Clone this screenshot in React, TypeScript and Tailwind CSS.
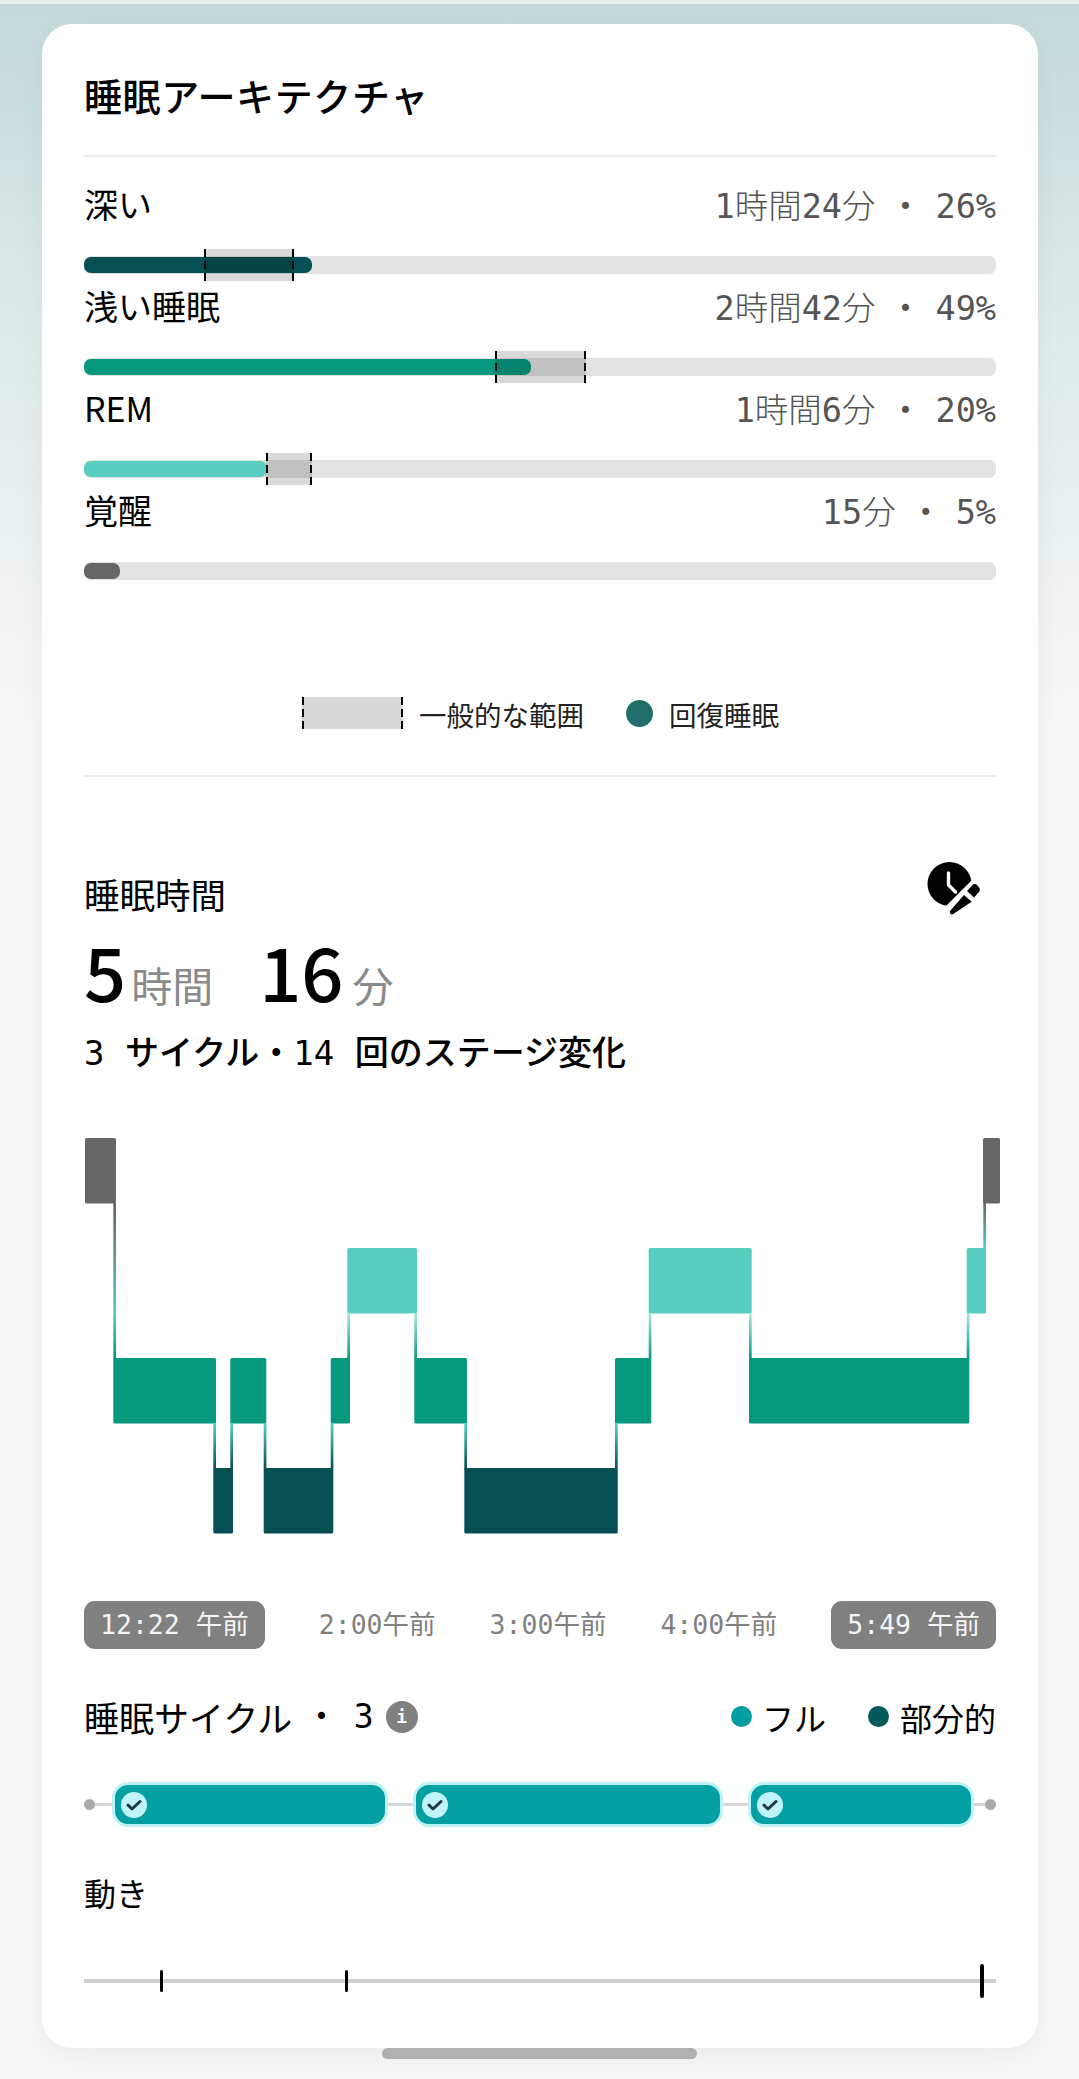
const mono = "font-['DejaVu_Sans_Mono','Noto_Sans_CJK_JP',monospace]";

const Tick = ({ side }: { side: "left" | "right" }) => (
  <span
    className={
      "absolute top-0 h-full w-[2px] bg-[repeating-linear-gradient(to_bottom,#000_0,#000_8px,transparent_8px,transparent_12px)] " +
      (side === "left" ? "left-0" : "right-0")
    }
  />
);

const Range = ({ left, width }: { left: number; width: number }) => (
  <div className="absolute top-[-7px] h-[32px] rounded-[3px] bg-[rgba(0,0,0,0.15)]" style={{ left, width }}>
    <Tick side="left" />
    <Tick side="right" />
  </div>
);

type RowData = {
  label: string;
  value: string;
  pct: string;
  fill: number;
  color: string;
  range?: [number, number];
};

const rows: RowData[] = [
  { label: "深い", value: "1時間24分", pct: "26%", fill: 228, color: "#065053", range: [120, 90] },
  { label: "浅い睡眠", value: "2時間42分", pct: "49%", fill: 447, color: "#07997e", range: [411, 91] },
  { label: "REM", value: "1時間6分", pct: "20%", fill: 183, color: "#57cebf", range: [182, 46] },
  { label: "覚醒", value: "15分", pct: "5%", fill: 36, color: "#666666" },
];

const SleepRow = ({ r }: { r: RowData }) => (
  <div className="flex flex-col">
    <div className="flex h-[44px] items-start justify-between">
      <span className="text-[34px] leading-[42px] text-black">{r.label}</span>
      <span className={"flex items-center pt-[3px] text-[33.5px] leading-[42px] font-light text-[#555555] " + mono}>
        <span>{r.value}</span>
        <span className="w-[60px] text-center text-[24px]">•</span>
        <span>{r.pct}</span>
      </span>
    </div>
    <div className="relative mt-[29px] h-[18px] rounded-[7px] bg-[#e3e3e3]">
      <div className="absolute top-[1px] left-0 h-[16px] rounded-[7px]" style={{ width: r.fill, background: r.color }} />
      {r.range && <Range left={r.range[0]} width={r.range[1]} />}
    </div>
  </div>
);

const DEEP = "#065053";
const LIGHT = "#07997e";
const REM = "#57cebf";
const AWAKE = "#666666";
const L: Record<string, [number, string]> = {
  a: [1138, AWAKE],
  r: [1248, REM],
  l: [1358, LIGHT],
  d: [1468, DEEP],
};
const blocks: [string, number, number][] = [
  ["a", 85, 116],
  ["l", 113.3, 216],
  ["d", 213.3, 233],
  ["l", 230.3, 266.3],
  ["d", 263.7, 333.3],
  ["l", 330.7, 350],
  ["r", 347.3, 417],
  ["l", 414.3, 467],
  ["d", 464.3, 617.7],
  ["l", 615, 651.3],
  ["r", 648.7, 751.7],
  ["l", 749, 969.3],
  ["r", 966.7, 986],
  ["a", 983, 1000],
];

const Chart = () => (
  <svg width="916" height="396" viewBox="84 1138 916 396" className="block flex-none">
    <defs>
      <linearGradient id="g0" x1="0" y1="0" x2="0" y2="1">
        <stop offset="0" stopColor="#666666" />
        <stop offset="0.7" stopColor="#57cebf" />
        <stop offset="1" stopColor="#07997e" />
      </linearGradient>
      <linearGradient id="gLD" x1="0" y1="0" x2="0" y2="1">
        <stop offset="0" stopColor="#57cebf" />
        <stop offset="1" stopColor="#065053" />
      </linearGradient>
      <linearGradient id="gRL" x1="0" y1="0" x2="0" y2="1">
        <stop offset="0" stopColor="#a5ebe0" />
        <stop offset="1" stopColor="#07997e" />
      </linearGradient>
      <linearGradient id="gAR" x1="0" y1="0" x2="0" y2="1">
        <stop offset="0" stopColor="#666666" />
        <stop offset="1" stopColor="#57cebf" />
      </linearGradient>
    </defs>
    {blocks.map((b, i) => {
      const [y, c] = L[b[0]];
      return <rect key={i} x={b[1]} y={y} width={b[2] - b[1]} height={65.5} rx={1.5} fill={c} />;
    })}
    <rect x="113.3" y="1203" width="2.7" height="156" fill="url(#g0)" />
    <rect x="213.3" y="1423" width="2.7" height="46" fill="url(#gLD)" />
    <rect x="230.3" y="1423" width="2.7" height="46" fill="url(#gLD)" />
    <rect x="263.7" y="1423" width="2.7" height="46" fill="url(#gLD)" />
    <rect x="330.7" y="1423" width="2.7" height="46" fill="url(#gLD)" />
    <rect x="347.3" y="1313" width="2.7" height="46" fill="url(#gRL)" />
    <rect x="414.3" y="1313" width="2.7" height="46" fill="url(#gRL)" />
    <rect x="464.3" y="1423" width="2.7" height="46" fill="url(#gLD)" />
    <rect x="615" y="1423" width="2.7" height="46" fill="url(#gLD)" />
    <rect x="648.7" y="1313" width="2.7" height="46" fill="url(#gRL)" />
    <rect x="749" y="1313" width="2.7" height="46" fill="url(#gRL)" />
    <rect x="966.7" y="1313" width="2.7" height="46" fill="url(#gRL)" />
    <rect x="983.3" y="1203" width="2.7" height="46" fill="url(#gAR)" />
  </svg>
);

const ClockPen = () => (
  <svg width="53" height="53" viewBox="0 0 53 53" className="block flex-none">
    <circle cx="22.5" cy="22" r="22" fill="#000" />
    <path d="M21.5 11V23L28.5 30" fill="none" stroke="#fff" strokeWidth="3.4" strokeLinecap="round" strokeLinejoin="round" />
    <path d="M19 44L45 18L62 36L36 62Z" fill="#fff" />
    <path d="M37 33L44.7 39.7L27 51.5Q24 53.5 23 51Q22.5 50 23.5 48.5Z" fill="#000" />
    <path d="M40 29L45 23.5Q47.5 21 50 23L52 25.5Q54 28 51.5 30.5L47 35.5Z" fill="#000" />
  </svg>
);

const CycleCheck = () => (
  <span className="flex h-[26px] w-[26px] flex-none items-center justify-center rounded-full bg-[#c0f4fb]">
    <svg width="16" height="12" viewBox="0 0 16 12">
      <path d="M2 6.2L6 10L14 2.5" fill="none" stroke="#1f3a44" strokeWidth="3" strokeLinecap="round" strokeLinejoin="round" />
    </svg>
  </span>
);

const Cycle = ({ w }: { w: number }) => (
  <div
    className="flex h-[45px] flex-none items-center rounded-[16px] border-[3px] border-[#bdf2f7] bg-[#039fa2] pl-[6px]"
    style={{ width: w }}
  >
    <CycleCheck />
  </div>
);

const Conn = ({ w }: { w: number }) => <div className="h-[3px] flex-none bg-[#d6d6d6]" style={{ width: w }} />;
const Dot = () => <div className="h-[11px] w-[11px] flex-none rounded-full bg-[#aaaaaa]" />;

export default function App() {
  return (
    <div className="relative h-[2079px] w-[1079px] overflow-hidden bg-[linear-gradient(to_bottom,#c2d9da_0px,#dfebea_320px,#f6f7f7_720px,#f7f7f7_100%)] font-['Noto_Sans_CJK_JP','Noto_Sans',sans-serif]">
      <div className="h-[4px] w-full bg-[#e6f0ee]" />
      <div className="mx-[42px] mt-[20px] flex h-[2024px] w-[996px] flex-col rounded-[30px] bg-white px-[42px] shadow-[0_8px_30px_rgba(0,0,0,0.05)]">
        <h1 className="mt-[47px] h-[49px] text-[38px] leading-[48px] font-medium tracking-[0.6px] text-black">睡眠アーキテクチャ</h1>
        <div className="mt-[35px] h-[2px] flex-none bg-[#ececec]" />

        <div className="mt-[26px] flex flex-col gap-[11px]">
          {rows.map((r) => (
            <SleepRow key={r.label} r={r} />
          ))}
        </div>

        <div className="mt-[117px] flex h-[32px] items-center">
          <div className="ml-[218px] flex items-center">
            <div className="relative h-[32px] w-[101px] rounded-[3px] bg-[#d8d8d8]">
              <Tick side="left" />
              <Tick side="right" />
            </div>
            <span className="ml-[16px] pt-[2px] text-[27.5px] leading-[32px] text-[#222222]">一般的な範囲</span>
            <span className="ml-[42px] h-[27px] w-[27px] rounded-full bg-[#216e6b]" />
            <span className="ml-[16px] pt-[2px] text-[27.5px] leading-[32px] text-[#222222]">回復睡眠</span>
          </div>
        </div>

        <div className="mt-[46px] h-[2px] flex-none bg-[#ececec]" />

        <div className="mt-[85px] flex h-[53px] items-start justify-between pr-[16px]">
          <span className="mt-[10px] text-[35.5px] leading-[44px] text-black">睡眠時間</span>
          <ClockPen />
        </div>

        <div className="mt-[25px] flex h-[60px] items-baseline">
          <span className="text-[74px] leading-[60px] font-medium text-black">5</span>
          <span className="ml-[5px] text-[41px] leading-[60px] text-[#8a8a8a]">時間</span>
          <span className="ml-[46px] text-[74px] leading-[60px] font-medium text-black">16</span>
          <span className="ml-[9px] text-[41px] leading-[60px] text-[#8a8a8a]">分</span>
        </div>

        <div className={"mt-[31px] h-[44px] text-[34px] leading-[44px] font-medium whitespace-pre text-black " + mono}>
          3 サイクル・14 回のステージ変化
        </div>

        <div className="mt-[63px]">
          <Chart />
        </div>

        <div className={"mt-[67px] flex h-[48px] items-center justify-between text-[26.5px] leading-[48px] " + mono}>
          <span className="rounded-[11px] bg-[#808080] px-[16px] text-[#f4f4f4]">12:22 午前</span>
          <span className="text-[#808080]">2:00午前</span>
          <span className="text-[#808080]">3:00午前</span>
          <span className="text-[#808080]">4:00午前</span>
          <span className="rounded-[11px] bg-[#808080] px-[16px] text-[#f4f4f4]">5:49 午前</span>
        </div>

        <div className="mt-[45px] flex h-[45px] items-center justify-between">
          <div className="flex items-center">
            <span className="text-[35px] leading-[44px] text-black">睡眠サイクル</span>
            <span className={"ml-[22px] text-[24px] leading-[44px] text-black " + mono}>•</span>
            <span className={"ml-[25px] text-[33px] leading-[44px] text-black " + mono}>3</span>
            <span className={"ml-[12px] flex h-[32px] w-[32px] items-center justify-center rounded-full bg-[#808080] text-[18px] font-bold text-white " + mono}>
              i
            </span>
          </div>
          <div className="flex items-center">
            <span className="h-[21px] w-[21px] rounded-full bg-[#049ea2]" />
            <span className="ml-[10px] text-[32px] leading-[44px] text-black">フル</span>
            <span className="ml-[42px] h-[21px] w-[21px] rounded-full bg-[#055a5c]" />
            <span className="ml-[11px] text-[32px] leading-[44px] text-black">部分的</span>
          </div>
        </div>

        <div className="mt-[43px] flex h-[45px] items-center">
          <Dot />
          <Conn w={17} />
          <Cycle w={276} />
          <Conn w={25} />
          <Cycle w={310} />
          <Conn w={25} />
          <Cycle w={226} />
          <Conn w={11} />
          <Dot />
        </div>

        <div className="mt-[43px] h-[44px] text-[32px] leading-[44px] text-black">動き</div>

        <div className="relative mt-[50px] flex h-[34px] items-center">
          <div className="h-[4px] w-full bg-[#cfcfcf]" />
          <span className="absolute top-[6px] left-[76px] h-[22px] w-[3px] rounded-full bg-black" />
          <span className="absolute top-[6px] left-[261px] h-[22px] w-[3px] rounded-full bg-black" />
          <span className="absolute top-0 left-[896px] h-[34px] w-[3.5px] rounded-full bg-black" />
        </div>
      </div>
      <div className="mx-auto h-[11px] w-[315px] rounded-full bg-[#b0b0b0]" />
    </div>
  );
}
